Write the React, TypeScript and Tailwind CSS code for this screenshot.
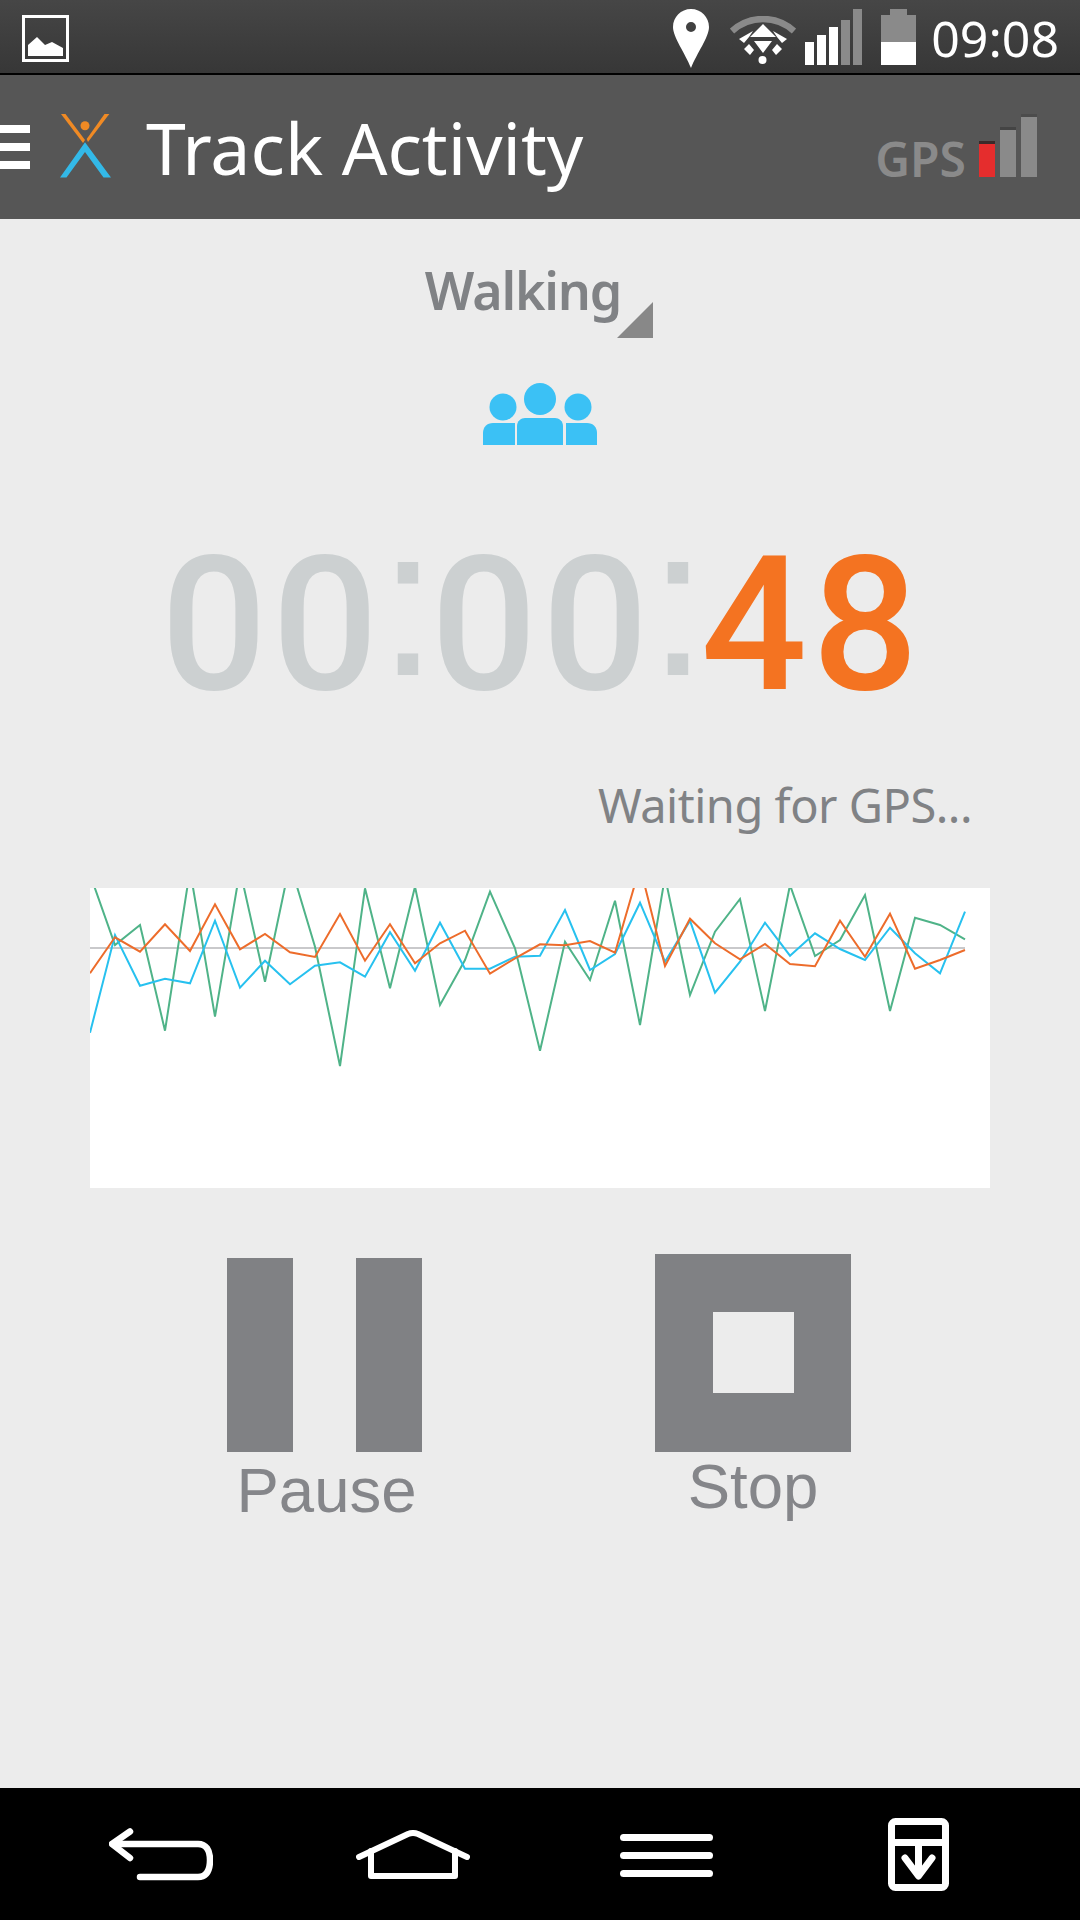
import React from "react";

const SANS = "font-['Noto_Sans',sans-serif]";

// chart series, y values read off the reference (px * 3, from y=880)
const GREEN = [-17, 195, 135, 452, -30, 410, -30, 305, -50, 200, 558, 25, 325, 20, 375, 240, 35, 205, 512, 185, 300, 62, 435, -10, 345, 155, 57, 393, 15, 228, 180, 45, 393, 113, 135, 178];
const BLUE = [458, 165, 317, 296, 310, 122, 323, 242, 313, 257, 247, 290, 157, 272, 128, 266, 266, 230, 227, 90, 270, 222, 68, 245, 122, 338, 245, 128, 227, 160, 207, 240, 143, 220, 280, 95];
const ORANGE = [280, 172, 215, 133, 213, 73, 208, 162, 217, 231, 102, 242, 133, 250, 190, 152, 281, 235, 193, 196, 183, 218, -40, 258, 116, 190, 238, 192, 252, 259, 122, 230, 101, 266, 240, 210];

const toPoints = (values: number[]) =>
  values.map((v, i) => `${i * 25},${(v / 3 - 8).toFixed(1)}`).join(" ");

const StatusBar = () => (
  <div className="h-[75px] shrink-0 flex items-start bg-gradient-to-b from-[#464646] to-[#373737] border-b-2 border-black relative">
    <svg className="ml-[22px] mt-[15px]" width="47" height="47" viewBox="0 0 47 47">
      <rect x="1.5" y="1.5" width="44" height="44" fill="none" stroke="#fff" strokeWidth="3" />
      <path d="M6 41V30L15 22L23 30L30 27L41 33V41Z" fill="#fff" />
    </svg>
    <div className="ml-auto flex items-start mr-[21px]">
      <svg className="mt-[9px]" width="36" height="59" viewBox="0 0 36 59">
        <path fillRule="evenodd" d="M18 0C8 0 0 8 0 18C0 28 12 44 18 59C24 44 36 28 36 18C36 8 28 0 18 0ZM18 13A5 5 0 1 1 18 23A5 5 0 1 1 18 13Z" fill="#fff" />
      </svg>
      <svg className="ml-[21px] mt-[16px]" width="66" height="49" viewBox="0 0 66 49">
        <path d="M2 15C20 -1 46 -1 64 15" fill="none" stroke="#8a8a8a" strokeWidth="6.5" />
        <path d="M9 23L23 15L19 21L14 27Z M57 23L43 15L47 21L52 27Z" fill="#fff" />
        <path d="M33 8L46 21H20Z M24 25H42L33 37Z" fill="#fff" />
        <path d="M19 28L24 34L20 39L14 33Z M47 28L42 34L46 39L52 33Z" fill="#fff" />
        <circle cx="32.5" cy="44" r="4" fill="#fff" />
      </svg>
      <div className="ml-[9px] mt-[9px] h-[56px] flex items-end gap-[3px]">
        <div className="w-[9px] h-[23px] bg-white" />
        <div className="w-[9px] h-[30px] bg-white" />
        <div className="w-[9px] h-[38px] bg-white" />
        <div className="w-[9px] h-[45px] bg-[#8a8a8a]" />
        <div className="w-[9px] h-[56px] bg-[#8a8a8a]" />
      </div>
      <div className="ml-[19px] mt-[9px] w-[35px] flex flex-col items-center">
        <div className="w-[17px] h-[6px] bg-[#8a8a8a]" />
        <div className="w-full h-[27px] bg-[#8a8a8a]" />
        <div className="w-full h-[23px] bg-white" />
      </div>
      <span className={`${SANS} ml-[15px] mt-[5px] text-[50px] leading-[66px] text-white`}>09:08</span>
    </div>
  </div>
);

const Header = () => (
  <div className="h-[144px] shrink-0 bg-[#565656] flex items-center relative">
    <div className="w-[30px] flex flex-col gap-[10px] mt-[-1px]">
      <div className="h-[8px] bg-white" />
      <div className="h-[8px] bg-white" />
      <div className="h-[8px] bg-white" />
    </div>
    <svg className="ml-[30px] mt-[-2px]" width="51" height="64" viewBox="0 0 51 64">
      <path d="M1 0H5.5L25 26L23 29Z" fill="#f08a24" />
      <path d="M49.3 0H44.5L26.7 25L28 28Z" fill="#f08a24" />
      <circle cx="25" cy="11.7" r="4.5" fill="#f08a24" />
      <path d="M25 28.3L0 63.5H6.5L25 38L43.5 63.5H51Z" fill="#33b9e8" />
    </svg>
    <h1 className={`${SANS} ml-[35px] text-[71.6px] leading-none font-normal text-white mt-[1px]`}>Track Activity</h1>
    <div className="ml-auto mr-[43px] flex items-end mt-[-3px]">
      <span className={`${SANS} text-[48px] leading-[36px] font-semibold text-[#8a8a8a] mr-[13px]`}>GPS</span>
      <div className="flex items-end gap-[5px]">
        <div className="w-[16px] h-[36px] bg-[#e52d2d] border-t-[3px] border-[#3a2a2a]" />
        <div className="w-[16px] h-[50px] bg-[#8a8a8a] border-t-[3px] border-[#444]" />
        <div className="w-[16px] h-[63px] bg-[#8a8a8a] border-t-[3px] border-[#4c4c4c]" />
      </div>
    </div>
  </div>
);

const People = () => (
  <svg width="114" height="62" viewBox="0 0 114 62" fill="#3bc1f5">
    <circle cx="57" cy="16" r="16" />
    <circle cx="20" cy="24" r="13.5" />
    <circle cx="95" cy="24" r="13.5" />
    <path d="M34 62V43C34 38 38 35 42 35H72C76 35 80 38 80 43V62Z" />
    <path d="M0 62V50C0 44 4 40 10 40H32V62Z" />
    <path d="M83 62V40H104C110 40 114 44 114 50V62Z" />
  </svg>
);

const Chart = () => (
  <div className="mt-[51px] mx-[90px] h-[300px] bg-white overflow-hidden">
    <svg width="900" height="300" viewBox="0 0 900 300">
      <line x1="0" y1="60" x2="875" y2="60" stroke="#c9c9cb" strokeWidth="2" />
      <polyline points={toPoints(GREEN)} fill="none" stroke="#4fb388" strokeWidth="2" />
      <polyline points={toPoints(BLUE)} fill="none" stroke="#27c1ef" strokeWidth="2" />
      <polyline points={toPoints(ORANGE)} fill="none" stroke="#ed6c2b" strokeWidth="2" />
    </svg>
  </div>
);

const NavBar = () => (
  <div className="h-[132px] shrink-0 bg-black flex items-start">
    <svg className="ml-[109px] mt-[40px]" width="104" height="53" viewBox="0 0 104 53" fill="none" stroke="#fff" strokeWidth="6.5" strokeLinecap="round" strokeLinejoin="round">
      <path d="M21 3.5L3 16L21 30" />
      <path d="M4 16H89C97 16 101 22 101 32C101 43 97 49 89 49H31" />
    </svg>
    <svg className="ml-[143px] mt-[42px]" width="114" height="50" viewBox="0 0 114 50" fill="none" stroke="#fff" strokeWidth="6" strokeLinecap="round" strokeLinejoin="round">
      <path d="M3 27L52 4Q57 2 62 4L111 27" />
      <path d="M15 21V46H99V21" />
    </svg>
    <div className="ml-[150px] mt-[46px] w-[93px] flex flex-col gap-[11px]">
      <div className="h-[7px] rounded-full bg-white" />
      <div className="h-[7px] rounded-full bg-white" />
      <div className="h-[7px] rounded-full bg-white" />
    </div>
    <svg className="ml-[175px] mt-[30px]" width="61" height="73" viewBox="0 0 61 73" fill="none" stroke="#fff" strokeWidth="7" strokeLinejoin="round">
      <rect x="3.5" y="3.5" width="54" height="66" rx="4" />
      <path d="M3 24.5H58" />
      <path d="M30.5 26V58" />
      <path d="M17 40L30.5 58L44 40" strokeLinecap="round" />
    </svg>
  </div>
);

// colons come from Arial metrics, they are square like the reference
const Colon = () => (
  <span className="font-['Liberation_Sans',sans-serif] text-[214px] font-normal tracking-[-7px] align-[14px] ml-[-5px]">:</span>
);

export default function App() {
  return (
    <div className="w-[1080px] h-[1920px] flex flex-col bg-[#ececec] overflow-hidden">
      <StatusBar />
      <Header />
      <main className="flex-1 flex flex-col">
        <div className="mt-[36px] h-[80px] flex justify-center relative">
          <span className={`${SANS} text-[52px] leading-[70px] tracking-[-1.2px] font-semibold text-[#808285] ml-[-34px]`}>Walking</span>
          <div className="absolute left-[617px] top-[47px] w-0 h-0 border-l-[36px] border-l-transparent border-b-[36px] border-b-[#888]" />
        </div>
        <div className="mt-[48px] flex justify-center">
          <People />
        </div>
        <div className="font-['Roboto',sans-serif] font-medium mt-[31px] h-[250px] pl-[4px] whitespace-nowrap text-center text-[187px] leading-[250px] tracking-[5px] text-[#ccd0d1]">
          00<Colon />00<Colon /><span className="text-[#f47321]">48</span>
        </div>
        <div className={`${SANS} mt-[47px] pr-[108px] text-right text-[47px] leading-[64px] tracking-[-0.5px] text-[#808285]`}>Waiting for GPS...</div>
        <Chart />
        <div className="mt-[66px] flex items-start">
          <div className="ml-[227px] w-[195px] flex flex-col items-center">
            <div className="mt-[4px] w-full h-[194px] flex justify-between">
              <div className="w-[66px] bg-[#808184]" />
              <div className="w-[66px] bg-[#808184]" />
            </div>
            <span className="mt-[2px] ml-[4px] font-['Liberation_Sans',sans-serif] text-[63.5px] leading-[72px] text-[#85868a]">Pause</span>
          </div>
          <div className="ml-[233px] w-[196px] flex flex-col items-center">
            <div className="w-full h-[198px] pb-[2px] bg-[#808184] flex items-center justify-center">
              <div className="w-[81px] h-[81px] bg-[#ececec]" />
            </div>
            <span className="mt-[-2px] font-['Liberation_Sans',sans-serif] text-[63.5px] leading-[72px] text-[#85868a]">Stop</span>
          </div>
        </div>
      </main>
      <NavBar />
    </div>
  );
}
